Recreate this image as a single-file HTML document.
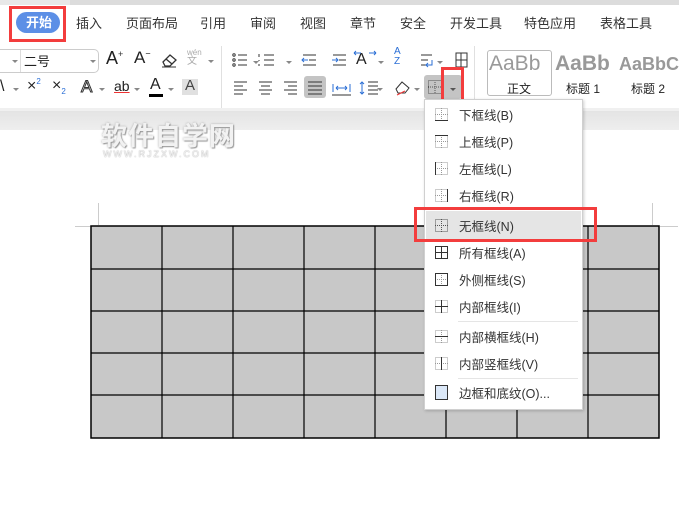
<!DOCTYPE html>
<html><head><meta charset="utf-8"><style>
*{margin:0;padding:0;box-sizing:border-box}
body{width:679px;height:514px;overflow:hidden;background:#fff;font-family:"Liberation Sans","Noto Sans CJK SC",sans-serif;position:relative;color:#333}
.a{position:absolute}
.tab{position:absolute;top:13px;font-size:13px;color:#333}
.t{position:absolute;font-size:13px;color:#222}
.ic{position:absolute}
.mi{position:absolute;left:459px;font-size:12.5px;color:#333}
.red{position:absolute;border:3px solid #f33d3d}
.caret{position:absolute;width:0;height:0;border-left:3px solid transparent;border-right:3px solid transparent;border-top:3px solid #888}
</style></head><body>
<div class="a" style="left:0;top:0;width:679px;height:5px;background:#dcdcdc"></div>
<div class="a" style="left:0;top:0;width:70px;height:5px;background:#e8e8e8"></div>
<!-- tabs -->
<div class="a" style="left:16px;top:12px;width:44px;height:21px;border-radius:11px;background:#5c8fe6"></div>
<div class="tab" style="left:26px;top:12px;color:#fff;font-weight:bold">开始</div>
<div class="tab" style="left:76px">插入</div>
<div class="tab" style="left:126px">页面布局</div>
<div class="tab" style="left:200px">引用</div>
<div class="tab" style="left:250px">审阅</div>
<div class="tab" style="left:300px">视图</div>
<div class="tab" style="left:350px">章节</div>
<div class="tab" style="left:400px">安全</div>
<div class="tab" style="left:450px">开发工具</div>
<div class="tab" style="left:524px">特色应用</div>
<div class="tab" style="left:600px">表格工具</div>
<div class="red" style="left:9px;top:6px;width:57px;height:36px"></div>
<!-- toolbar -->
<div class="a" style="left:0;top:49px;width:99px;height:24px;border:1px solid #ccc;border-left:none;border-radius:0 5px 5px 0;background:#fff"></div>
<div class="a" style="left:20px;top:50px;width:1px;height:22px;background:#ddd"></div>
<div class="caret" style="left:12px;top:60px"></div>
<div class="t" style="left:24px;top:51px;font-size:13px">二号</div>
<div class="caret" style="left:90px;top:60px"></div>
<div class="t" style="left:106px;top:48px;font-size:18px">A<sup style="font-size:9px;color:#333">+</sup></div>
<div class="t" style="left:134px;top:48px;font-size:17px">A<sup style="font-size:9px">−</sup></div>
<svg class="ic" style="left:160px;top:52px" width="18" height="16"><path d="M3 10 L10 3 L16 8 L10 14 L5 14 Z M6 7 L12 12" fill="none" stroke="#333" stroke-width="1.3"/><path d="M2 15 H16" stroke="#333"/></svg>
<div class="t" style="left:187px;top:48px;font-size:8px;color:#aaa;line-height:9px">wén<br><span style="font-size:10px">文</span></div>
<div class="caret" style="left:208px;top:60px"></div>
<div class="a" style="left:221px;top:46px;width:1px;height:62px;background:#e0e0e0"></div>
<!-- row 2 left -->
<div class="t" style="left:0;top:78px;font-size:16px">\</div>
<div class="caret" style="left:13px;top:88px"></div>
<div class="t" style="left:27px;top:77px;font-size:16px">×<sup style="font-size:8px;color:#2b6fd6">2</sup></div>
<div class="t" style="left:52px;top:77px;font-size:16px">×<sub style="font-size:8px;color:#2b6fd6">2</sub></div>
<div class="t" style="left:81px;top:77px;font-size:17px;color:#fff;-webkit-text-stroke:1px #333">A</div>
<div class="caret" style="left:99px;top:88px"></div>
<div class="t" style="left:114px;top:78px;font-size:14px;text-decoration:underline;text-decoration-color:#e33">ab</div>
<div class="caret" style="left:134px;top:88px"></div>
<div class="t" style="left:150px;top:76px;font-size:16px">A</div>
<div class="a" style="left:149px;top:94px;width:14px;height:3px;background:#000"></div>
<div class="caret" style="left:168px;top:88px"></div>
<div class="a" style="left:182px;top:79px;width:16px;height:16px;background:#e0e0e0"></div>
<div class="t" style="left:185px;top:77px;font-size:15px;color:#444">A</div>
<!-- lists -->
<svg class="ic" style="left:232px;top:52px" width="160" height="16" stroke="#333" fill="none">
<circle cx="2" cy="3" r="1.2"/><circle cx="2" cy="8" r="1.2"/><circle cx="2" cy="13" r="1.2"/><path d="M6 3H15M6 8H15M6 13H15"/>
<path d="M32 3H42M32 8H42M32 13H42M27 2V5M27 8V9M27 12V14"/>
<path d="M71 3H84M77 8H84M71 13H84" /><path d="M76 8H70M72 6L70 8L72 10" stroke="#2b6fd6"/>
<path d="M101 3H114M107 8H114M101 13H114"/><path d="M100 8H106M104 6L106 8L104 10" stroke="#2b6fd6"/>
</svg>
<div class="caret" style="left:253px;top:61px"></div>
<div class="caret" style="left:286px;top:61px"></div>
<div class="t" style="left:356px;top:51px;font-size:16px">A</div>
<svg class="ic" style="left:353px;top:50px" width="24" height="6" stroke="#2b6fd6" fill="none"><path d="M1 3H8M1 3L3 1M1 3L3 5M23 3H16M23 3L21 1M23 3L21 5"/></svg>
<div class="caret" style="left:378px;top:61px"></div>
<div class="t" style="left:394px;top:47px;font-size:10px;color:#2b6fd6;line-height:10px">A<br>Z</div>
<svg class="ic" style="left:420px;top:51px" width="50" height="18" fill="none" stroke="#333"><path d="M1 4H12M1 9H8M1 14H8"/><path d="M12 9V14H6M8 12L6 14L8 16" stroke="#2b6fd6"/><rect x="36" y="2" width="11" height="14"/><path d="M41 2V16M36 9H47"/></svg>
<div class="caret" style="left:437px;top:61px"></div>
<!-- row2 align -->
<svg class="ic" style="left:233px;top:80px" width="180" height="16" fill="none" stroke="#333">
<path d="M1 2H14M1 6H10M1 10H14M1 14H10"/>
<path d="M26 2H39M28 6H37M26 10H39M28 14H37"/>
<path d="M51 2H64M55 6H64M51 10H64M55 14H64"/>
<path d="M100 4V12M117 4V12M103 8H114M103 8L105 6M103 8L105 10M114 8L112 6M114 8L112 10" stroke="#2b6fd6"/><path d="M99 15H118"/>
<path d="M135 2H145M135 6H145M135 10H145M135 14H145"/><path d="M129 2V14M127 4L129 2L131 4M127 12L129 14L131 12" stroke="#2b6fd6"/>
</svg>
<div class="a" style="left:304px;top:76px;width:22px;height:22px;background:#c4c4c4;border-radius:3px"></div>
<svg class="ic" style="left:307px;top:80px" width="16" height="16" stroke="#333"><path d="M1 2H15M1 6H15M1 10H15M1 14H15"/></svg>
<div class="caret" style="left:377px;top:88px"></div>
<svg class="ic" style="left:394px;top:79px" width="20" height="18" fill="none" stroke="#333"><path d="M2 10L8 3L15 9L11 14H4Z"/><path d="M3 16L11 12" stroke="#e33"/></svg>
<div class="caret" style="left:414px;top:88px"></div>
<div class="a" style="left:424px;top:75px;width:38px;height:24px;background:#c4c4c4;border-radius:3px"></div>
<svg class="ic" style="left:428px;top:80px" width="14" height="14" stroke="#555" stroke-dasharray="1 1" fill="none"><rect x="0.5" y="0.5" width="13" height="13"/><path d="M7 0V14M0 7H14"/></svg>
<div class="caret" style="left:450px;top:88px;border-top-color:#555"></div>
<div class="red" style="left:441px;top:67px;width:23px;height:40px"></div>
<!-- styles -->
<div class="a" style="left:474px;top:46px;width:1px;height:62px;background:#e0e0e0"></div>
<div class="a" style="left:487px;top:50px;width:65px;height:46px;border:1px solid #bbb;border-radius:3px"></div>
<div class="t" style="left:489px;top:52px;font-size:21px;color:#999">AaBb</div>
<div class="t" style="left:507px;top:80px;font-size:12px">正文</div>
<div class="t" style="left:555px;top:52px;font-size:21px;color:#999;font-weight:bold">AaBb</div>
<div class="t" style="left:566px;top:80px;font-size:12px">标题 1</div>
<div class="t" style="left:619px;top:54px;font-size:18px;color:#999;font-weight:bold">AaBbC</div>
<div class="t" style="left:631px;top:80px;font-size:12px">标题 2</div>
<!-- gray band -->
<div class="a" style="left:0;top:108px;width:679px;height:3px;background:#f0f0f0"></div>
<div class="a" style="left:0;top:111px;width:679px;height:19px;background:linear-gradient(#e4e4e4,#eeeeee)"></div>
<!-- watermark -->
<div class="a" style="left:101px;top:116px;font-size:26px;font-weight:bold;color:#f2f2f2;text-shadow:1px 1px 1px #999,0 0 2px #aaa;letter-spacing:1px">软件自学网</div>
<div class="a" style="left:103px;top:149px;font-size:9px;color:#f2f2f2;text-shadow:0 0 1px #888;letter-spacing:2px">WWW.RJZXW.COM</div>
<!-- page corner marks -->
<div class="a" style="left:98px;top:203px;width:1px;height:22px;background:#ccc"></div>
<div class="a" style="left:75px;top:226px;width:22px;height:1px;background:#ccc"></div>
<div class="a" style="left:652px;top:203px;width:1px;height:22px;background:#ccc"></div>
<div class="a" style="left:660px;top:226px;width:18px;height:1px;background:#ccc"></div>
<!-- table -->
<svg class="a" style="left:90px;top:225px" width="571" height="215">
<rect x="1" y="1" width="568" height="212" fill="#c8c8c8" stroke="#000" stroke-width="1.5"/>
<g stroke="#000" stroke-width="1.2">
<path d="M72 1V213M143 1V213M214 1V213M285 1V213M356 1V213M427 1V213M498 1V213"/>
<path d="M1 44H569M1 86H569M1 128H569M1 170H569"/>
</g></svg>
<!-- menu -->
<div class="a" style="left:424px;top:99px;width:159px;height:311px;background:#fff;border:1px solid #d0d0d0;box-shadow:1px 1px 3px rgba(0,0,0,.2)"></div>
<div class="a" style="left:426px;top:211px;width:155px;height:29px;background:#e5e5e5"></div>
<div class="a" style="left:458px;top:321px;width:120px;height:1px;background:#e5e5e5"></div>
<div class="a" style="left:458px;top:378px;width:120px;height:1px;background:#e5e5e5"></div>
<div class="mi" style="top:105px">下框线(B)</div>
<div class="mi" style="top:132px">上框线(P)</div>
<div class="mi" style="top:159px">左框线(L)</div>
<div class="mi" style="top:186px">右框线(R)</div>
<div class="mi" style="top:216px">无框线(N)</div>
<div class="mi" style="top:243px">所有框线(A)</div>
<div class="mi" style="top:270px">外侧框线(S)</div>
<div class="mi" style="top:297px">内部框线(I)</div>
<div class="mi" style="top:327px">内部横框线(H)</div>
<div class="mi" style="top:354px">内部竖框线(V)</div>
<div class="mi" style="top:383px">边框和底纹(O)...</div>
<svg class="a" style="left:434px;top:106px" width="16" height="300" fill="none" stroke-width="1">
<g stroke="#999" stroke-dasharray="1 1">
<rect x="1.5" y="2.5" width="12" height="12"/><path d="M7.5 2V15M1 8.5H14"/>
<rect x="1.5" y="29.5" width="12" height="12"/><path d="M7.5 29V42M1 35.5H14"/>
<rect x="1.5" y="56.5" width="12" height="12"/><path d="M7.5 56V69M1 62.5H14"/>
<rect x="1.5" y="83.5" width="12" height="12"/><path d="M7.5 83V96M1 89.5H14"/>
<rect x="1.5" y="113.5" width="12" height="12" stroke="#555"/><path d="M7.5 113V126M1 119.5H14" stroke="#555"/>
<path d="M7.5 167V180M1 173.5H14"/>
<rect x="1.5" y="194.5" width="12" height="12"/>
<rect x="1.5" y="224.5" width="12" height="12"/><path d="M7.5 224V237"/>
<rect x="1.5" y="251.5" width="12" height="12"/><path d="M1 257.5H14"/>
</g>
<g stroke="#333">
<path d="M1 14.5H14"/><path d="M1 29.5H14"/><path d="M1.5 56V69"/><path d="M13.5 83V96"/>
<rect x="1.5" y="140.5" width="12" height="12"/><path d="M7.5 140V153M1 146.5H14"/>
<rect x="1.5" y="167.5" width="12" height="12"/>
<path d="M7.5 194V207M1 200.5H14"/>
<path d="M1 230.5H14"/><path d="M7.5 251V264"/>
<rect x="1.5" y="279.5" width="12" height="14" fill="#dbe8f8"/>
</g></svg>
<div class="red" style="left:414px;top:207px;width:183px;height:35px"></div>
</body></html>
